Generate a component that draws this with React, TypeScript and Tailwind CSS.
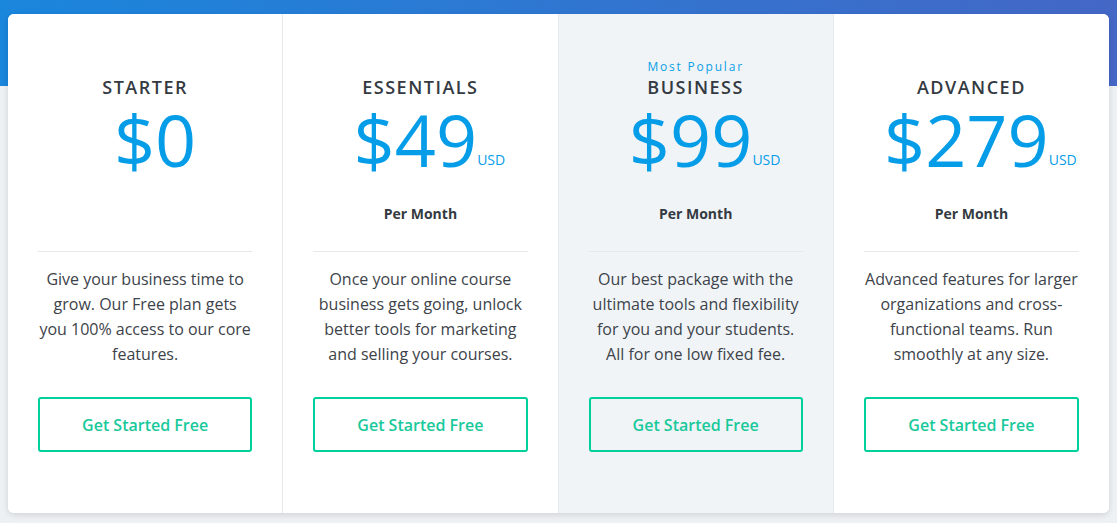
import React from "react";

interface Plan {
  name: string;
  price: string;
  usd: boolean;
  perMonth: boolean;
  popular: boolean;
  shift: string;
  description: string;
}

const plans: Plan[] = [
  {
    name: "STARTER",
    price: "$0",
    usd: false,
    perMonth: false,
    popular: false,
    shift: "translate-x-[10px]",
    description:
      "Give your business time to grow. Our Free plan gets you 100% access to our core features.",
  },
  {
    name: "ESSENTIALS",
    price: "$49",
    usd: true,
    perMonth: true,
    popular: false,
    shift: "-translate-x-[5px]",
    description:
      "Once your online course business gets going, unlock better tools for marketing and selling your courses.",
  },
  {
    name: "BUSINESS",
    price: "$99",
    usd: true,
    perMonth: true,
    popular: true,
    shift: "-translate-x-[5px]",
    description:
      "Our best package with the ultimate tools and flexibility for you and your students. All for one low fixed fee.",
  },
  {
    name: "ADVANCED",
    price: "$279",
    usd: true,
    perMonth: true,
    popular: false,
    shift: "-translate-x-[5px]",
    description:
      "Advanced features for larger organizations and cross-functional teams. Run smoothly at any size.",
  },
];

function PlanColumn({ plan, last }: { plan: Plan; last: boolean }) {
  return (
    <div
      className={`flex flex-col items-center px-[30px] pt-[44px] ${
        plan.popular ? "bg-[#f0f4f7]" : "bg-white"
      } ${last ? "" : "border-r border-[#e6e9ec]"}`}
    >
      {/* Most popular tag */}
      <div className="h-[18px] text-[12px] leading-[18px] tracking-[1.8px] text-[#0c9fe6]">
        {plan.popular ? "Most Popular" : ""}
      </div>
      <h3 className="text-[18px] leading-[22px] tracking-[1.5px] font-semibold text-[#343a41]">
        {plan.name}
      </h3>

      {/* Price */}
      <div className={`relative mt-[5px] h-[72px] ${plan.shift}`}>
        <span className="text-[72px] leading-[72px] text-[#069de8]">{plan.price}</span>
        {plan.usd && (
          <span className="absolute left-full bottom-[7px] text-[14px] leading-[16px] text-[#069de8]">
            USD
          </span>
        )}
      </div>

      <div className="mt-[29px] h-[20px] text-[14px] leading-[20px] font-bold text-[#343a41]">
        {plan.perMonth ? "Per Month" : ""}
      </div>

      <div className="mt-[27px] h-px w-full bg-[#e6e9ec]" />

      <p className="mt-[15px] h-[100px] text-center text-[16px] leading-[25px] text-[#3d434a]">
        {plan.description}
      </p>

      <button className="mt-[30px] h-[55px] w-full rounded-[3px] border-2 border-[#00d09c] text-[16px] font-semibold text-[#19c99b]">
        Get Started Free
      </button>
    </div>
  );
}

export default function App() {
  return (
    <div className="h-[523px] w-full overflow-hidden pt-[14px] font-['Open_Sans',sans-serif] [background:linear-gradient(to_right,#1a86dc,#4467c6)_0_0/100%_86px_no-repeat,#edf1f4]">
      <div className="mx-[8px] grid h-[499px] grid-cols-4 overflow-hidden rounded-[6px] bg-white shadow-[0_2px_6px_rgba(0,0,0,0.12)]">
        {plans.map((plan, i) => (
          <PlanColumn key={plan.name} plan={plan} last={i === plans.length - 1} />
        ))}
      </div>
    </div>
  );
}
